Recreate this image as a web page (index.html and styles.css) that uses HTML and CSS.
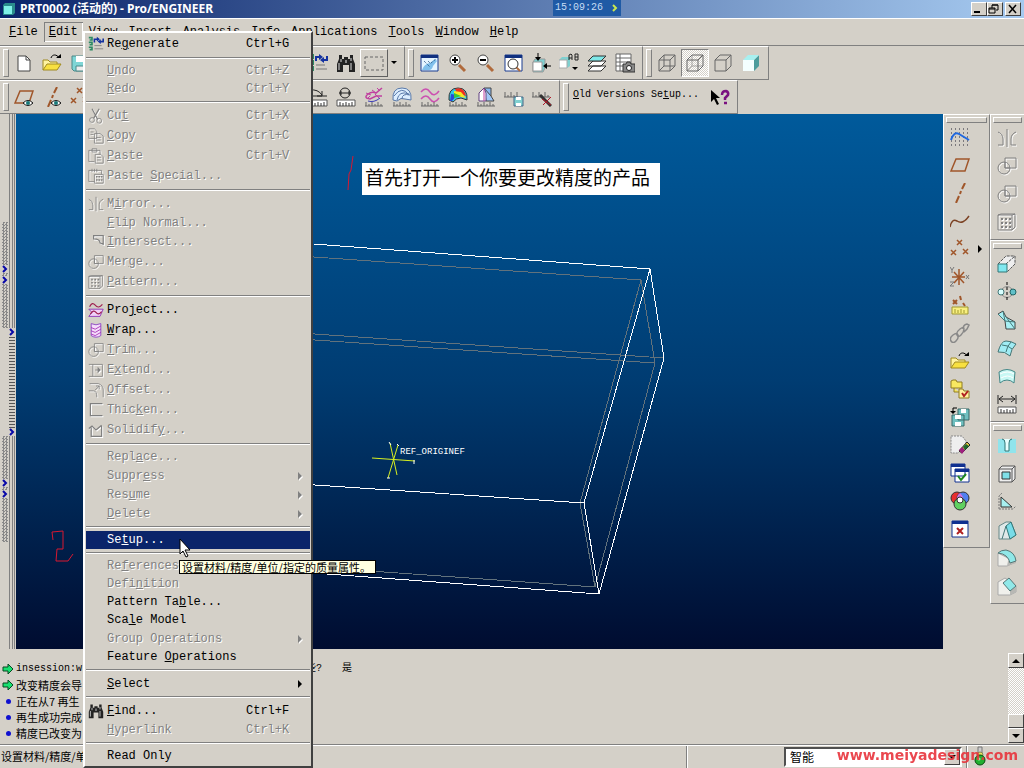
FILE: index.html
```
<!DOCTYPE html>
<html lang="zh-CN">
<head>
    <meta charset="UTF-8">
    <meta name="viewport" content="width=device-width, initial-scale=1.0">
    <title>PRT0002 - Pro/ENGINEER</title>
    <link rel="stylesheet" href="styles.css">
</head>
<body>
    <!-- Shared icon shapes -->
    <svg class="sprite" aria-hidden="true">
        <symbol id="i-regen" viewBox="0 0 20 20">
            <path d="M1 2h4v3H2M1 8h4v3H2M1 14h4v3H2" fill="none" stroke="#2b8a62" stroke-width="2"/>
            <path d="M8 8V4h4M19 3v4h-4" fill="none" stroke="#1432a0" stroke-width="2"/>
            <path d="M11 1l4 3-4 3zM16 10l-4-3 4-3z" fill="#1432a0"/>
            <path d="M8 12h9M8 16h11" stroke="#777"/>
        </symbol>
        <symbol id="i-find" viewBox="0 0 20 20">
            <path d="M3 2h3v4h2V4h4v2h2V2h3v4l2 5v8h-6v-7H7v7H1v-8l2-5z" fill="#222"/>
            <path d="M3 10v7M5 6v3M15 10v7M15 5v3" stroke="#ddd"/>
            <path d="M9 7h2v3H9z" fill="#888"/>
        </symbol>
        <symbol id="i-open" viewBox="0 0 20 20">
            <path d="M1 17V7h5l2 2h7v3" fill="#fff3a0" stroke="#a08a20"/>
            <path d="M1 17l4-6h14l-4 6z" fill="#f8e040" stroke="#a08a20"/>
            <path d="M9 5c1-4 6-4 8 0" fill="none" stroke="#000"/>
            <path d="M14 5h5V1z" fill="#000"/>
        </symbol>
        <symbol id="i-new" viewBox="0 0 20 20">
            <path d="M4 3h8l4 4v11H4z" fill="#fff" stroke="#444"/>
            <path d="M12 3v4h4" fill="none" stroke="#444"/>
        </symbol>
        <symbol id="i-save" viewBox="0 0 20 20">
            <path d="M2 3h16v15H4l-2-2z" fill="#7fd6d6" stroke="#4a8888"/>
            <path d="M6 3h9v6H6z" fill="#fff"/>
            <path d="M6 13h8v5H6z" fill="#eee" stroke="#4a8888"/>
        </symbol>
        <symbol id="i-eye" viewBox="0 0 20 20">
            <path d="M9 16q5-5 10 0q-5 5-10 0z" fill="#fff" stroke="#111"/>
            <circle cx="14" cy="16" r="2" fill="#187878"/>
        </symbol>
        <symbol id="i-plane" viewBox="0 0 20 20">
            <path d="M6 4h13l-4 12H1z" fill="none" stroke="#a0562a" stroke-width="1.5"/>
        </symbol>
        <symbol id="i-axis" viewBox="0 0 20 20">
            <path d="M15 0l-3 6M11 8l-1 3M9 13l-3 7" stroke="#a0562a" stroke-width="2"/>
        </symbol>
        <symbol id="i-points" viewBox="0 0 20 20">
            <path d="M7 1l5 5M12 1L7 6M1 11l5 5M6 11l-5 5M13 10l5 5M18 10l-5 5" stroke="#a0562a" stroke-width="1.5"/>
        </symbol>
        <symbol id="i-mirror" viewBox="0 0 20 20">
            <path d="M10 1v18M1 4q5 2 5 7v6H1M19 4q-5 2-5 7v6h5" fill="none" stroke="currentColor"/>
        </symbol>
        <symbol id="i-merge" viewBox="0 0 20 20">
            <path d="M8 2h11v10H8z" fill="none" stroke="currentColor"/>
            <circle cx="7" cy="12" r="6" fill="none" stroke="currentColor"/>
            <path d="M8 6v6h5" fill="none" stroke="currentColor"/>
        </symbol>
        <symbol id="i-pattern" viewBox="0 0 20 20">
            <path d="M1 3h14v15H1zM15 3l3-1v13l-3 3M1 3l3-1h14" fill="none" stroke="currentColor"/>
            <path d="M4 7h10M4 11h10M4 15h10" stroke="currentColor" stroke-width="2" stroke-dasharray="2 2"/>
        </symbol>
        <symbol id="i-cube" viewBox="0 0 20 20">
            <path d="M2 7h11v11H2zM2 7l5-5h11v11l-5 5M13 7l5-5" fill="none" stroke="#666"/>
        </symbol>
        <symbol id="i-cube-back" viewBox="0 0 20 20">
            <path d="M7 2v11h11M7 13l-5 5" fill="none" stroke="#666"/>
        </symbol>
        <symbol id="i-ruler" viewBox="0 0 20 20">
            <path d="M1 13h18v6H1z" fill="#fff" stroke="#555"/>
            <path d="M4 15v4M7 16v3M10 15v4M13 16v3M16 15v4" stroke="#333"/>
        </symbol>
        <symbol id="i-scale" viewBox="0 0 20 20">
            <path d="M1 19h18M2 15v4M5 17v2M8 15v4M11 17v2M14 15v4M17 17v2" stroke="#666"/>
        </symbol>
        <symbol id="i-sub" viewBox="0 0 8 8">
            <path d="M2 0l4 4-4 4z" fill="currentColor"/>
        </symbol>
        <symbol id="i-chevron" viewBox="0 0 6 8">
            <path d="M1 1l3 3-3 3" fill="none" stroke="#0808a8" stroke-width="2"/>
        </symbol>
        <symbol id="i-arrow" viewBox="0 0 12 12">
            <path d="M1 4h5V1l5 5-5 5V8H1z" fill="#18e070" stroke="#064820"/>
        </symbol>
    </svg>

    <!-- Title bar -->
    <header class="titlebar">
        <svg class="app-icon" viewBox="0 0 12 12"><path d="M0 2l2-2h10v10l-2 2H0z" fill="#2a8c8c"/><path d="M1 3h8v8H1z" fill="#7ff0e8"/></svg>
        <h1>PRT0002 (活动的) - Pro/ENGINEER</h1>
        <div class="clock">15:09:26 <svg viewBox="0 0 6 8"><path d="M1 1l3 3-3 3" fill="none" stroke="#c8e850" stroke-width="2"/></svg></div>
        <div class="window-buttons">
            <button class="win-btn" aria-label="Minimize"><svg viewBox="0 0 12 10"><path d="M2 8h6" stroke="#000" stroke-width="2"/></svg></button>
            <button class="win-btn" aria-label="Restore"><svg viewBox="0 0 12 10"><path d="M4 4V1h6v5H8M4 1h6M1 4h6v5H1zM1 5h6" fill="none" stroke="#000"/></svg></button>
            <button class="win-btn close" aria-label="Close"><svg viewBox="0 0 12 10"><path d="M3 1l7 8M10 1L3 9" stroke="#000" stroke-width="1.5"/></svg></button>
        </div>
    </header>

    <nav class="menubar">
        <button><u>F</u>ile</button>
        <button class="open"><u>E</u>dit</button>
        <button><u>V</u>iew</button>
        <button><u>I</u>nsert</button>
        <button><u>A</u>nalysis</button>
        <button>I<u>n</u>fo</button>
        <button>A<u>p</u>plications</button>
        <button><u>T</u>ools</button>
        <button><u>W</u>indow</button>
        <button><u>H</u>elp</button>
    </nav>

    <!-- Toolbars -->
    <div class="toolbar">
        <div class="group group-file">
            <div class="tools">
                <button class="tool" aria-label="New"><svg><use href="#i-new"/></svg></button>
                <button class="tool" aria-label="Open"><svg><use href="#i-open"/></svg></button>
                <button class="tool" aria-label="Save"><svg><use href="#i-save"/></svg></button>
            </div>
            <div class="tools">
                <button class="tool" aria-label="Regenerate"><svg><use href="#i-regen"/></svg></button>
                <button class="tool" aria-label="Find"><svg><use href="#i-find"/></svg></button>
                <button class="tool raised" aria-label="Select box"><svg viewBox="0 0 20 20"><path d="M1 4h18v13H1z" fill="none" stroke="#666" stroke-dasharray="3 2"/></svg></button>
                <button class="drop" aria-label="Selection options"><svg viewBox="0 0 6 4"><path d="M0 0h6L3 3z"/></svg></button>
            </div>
        </div>
        <div class="group">
            <button class="tool" aria-label="Repaint"><svg viewBox="0 0 20 20"><path d="M2 2h17v16H2z" fill="#e4f4ff" stroke="#1a3c90"/><path d="M2 2h17v3H2z" fill="#103080"/><path d="M3 17q2-6 8-7l5-4 2 2-4 5q-1 4-4 4z" fill="#80c0ec"/><path d="M5 8l6 6M9 8l3 3M12 10l5-4" fill="none" stroke="#205080" stroke-dasharray="1 1"/></svg></button>
            <button class="tool" aria-label="Zoom in"><svg viewBox="0 0 20 20"><path d="M12 12l6 6" stroke="#b06a3c" stroke-width="3"/><circle cx="8" cy="7" r="5" fill="#fff" stroke="#444"/><path d="M5 7h6M8 4v6" stroke="#000" stroke-width="2"/></svg></button>
            <button class="tool" aria-label="Zoom out"><svg viewBox="0 0 20 20"><path d="M12 12l6 6" stroke="#b06a3c" stroke-width="3"/><circle cx="8" cy="7" r="5" fill="#fff" stroke="#444"/><path d="M5 7h6" stroke="#000" stroke-width="2"/></svg></button>
            <button class="tool" aria-label="Refit"><svg viewBox="0 0 20 20"><path d="M2 2h17v16H2z" fill="#fff" stroke="#1a3c90"/><path d="M2 2h17v3H2z" fill="#103080"/><path d="M13 14l4 4" stroke="#b06a3c" stroke-width="2"/><circle cx="10" cy="11" r="5" fill="#fff" stroke="#333"/></svg></button>
            <button class="tool" aria-label="Reorient"><svg viewBox="0 0 20 20"><path d="M2 9l2-3h10v9l-2 4H2z" fill="#7fd0d0" stroke="#999"/><path d="M2 9h9v9H2z" fill="#fff" stroke="#999"/><path d="M7 0v5M20 13h-5" stroke="#000"/><path d="M4 4h6L7 8zM16 10v6l-4-3z"/></svg></button>
            <button class="tool" aria-label="Saved views"><svg viewBox="0 0 20 20"><path d="M0 7l3-3h8v9l-3 2H0z" fill="#7fd0d0"/><path d="M0 7h8v8H0z" fill="#fff" stroke="#aaa"/><path d="M10 7V2l2-1 1 1v5M10 5h3M16 1v6h3V1h-3M16 4h3" fill="none" stroke="#222"/><path d="M13 14h6l-3 3z"/></svg></button>
            <button class="tool" aria-label="Layers"><svg viewBox="0 0 20 20"><path d="M1 18l5-5h13l-5 5zM1 13l5-5h13l-5 5z" fill="#fff" stroke="#333"/><path d="M1 8l5-5h13l-5 5z" fill="#7fe8e8" stroke="#333"/></svg></button>
            <button class="tool" aria-label="View manager"><svg viewBox="0 0 20 20"><path d="M1 1h15v17H1zM1 5h15M1 9h15M1 13h15M5 1v17" fill="#fff" stroke="#666"/><path d="M8 11h3l1-2h3l1 2h4v8H8z" fill="#888" stroke="#333"/><circle cx="14" cy="15" r="2.5" fill="#fff" stroke="#222"/></svg></button>
        </div>
        <div class="group last">
            <button class="tool" aria-label="Wireframe"><svg><use href="#i-cube"/><use href="#i-cube-back"/></svg></button>
            <button class="tool pressed" aria-label="Hidden line"><svg><use href="#i-cube"/><use href="#i-cube-back" opacity=".5"/></svg></button>
            <button class="tool" aria-label="No hidden"><svg><use href="#i-cube"/></svg></button>
            <button class="tool" aria-label="Shading"><svg viewBox="0 0 20 20"><path d="M13 7l5-5v11l-5 5z" fill="#4c9c9c"/><path d="M2 7l5-5h11l-5 5z" fill="#a8f0f0"/><path d="M2 7h11v11H2z" fill="#f4ffff"/></svg></button>
        </div>
    </div>

    <div class="toolbar">
        <div class="group group-datum">
            <div class="tools">
                <button class="tool" aria-label="Datum planes"><svg><use href="#i-plane"/><use href="#i-eye"/></svg></button>
                <button class="tool" aria-label="Datum axes"><svg><use href="#i-axis"/><use href="#i-eye"/></svg></button>
                <button class="tool" aria-label="Datum points"><svg><use href="#i-points"/></svg></button>
            </div>
            <div class="tools">
                <button class="tool" aria-label="Angle"><svg viewBox="0 0 20 20"><path d="M2 3q8-1 12 5M14 4v5H9M1 9h18" fill="none" stroke="#222"/><use href="#i-ruler"/></svg></button>
                <button class="tool" aria-label="Diameter"><svg viewBox="0 0 20 20"><circle cx="9" cy="6" r="5" fill="none" stroke="#222"/><path d="M3 6h12M5 4v4M13 4v4" stroke="#222"/><use href="#i-ruler"/></svg></button>
                <button class="tool" aria-label="Curvature"><svg viewBox="0 0 20 20"><path d="M18 1l-6 5q-4-2-8 1-5 4 2 5l6-3h6" fill="none" stroke="#c040a0" stroke-width="1.5"/><path d="M13 1l3 3M8 3l4 3M2 6l5 2M3 12l3-3M11 7l4 4" fill="none" stroke="#c040a0"/><path d="M4 14q6 2 12-3" fill="none" stroke="#4040b8"/><use href="#i-scale"/></svg></button>
                <button class="tool" aria-label="Sections"><svg viewBox="0 0 20 20"><path d="M1 13Q0 1 10 1t9 12l-6-1q-4-2-8 2z" fill="#dceeff" stroke="#5878a8"/><path d="M2 9Q10-2 17 8M5 13Q7 3 17 7M10 12q0-6 8-4" fill="none" stroke="#5878a8"/><use href="#i-scale"/></svg></button>
                <button class="tool" aria-label="Offset analysis"><svg viewBox="0 0 20 20"><path d="M1 5q5-6 9 0t9-1M1 12q5-6 9 0t9-1" fill="none" stroke="#cc50b0" stroke-width="1.5"/><use href="#i-scale"/></svg></button>
                <button class="tool" aria-label="Shaded curvature"><svg viewBox="0 0 20 20"><path d="M1 13Q0 1 10 1t9 12l-6-2q-5 0-8 4z" fill="#30c8e8" stroke="#333"/><path d="M7 2q9-3 11 7l-9-3z" fill="#f03020"/><path d="M6 4l7 1 5 6-5-1-7-2z" fill="#f8e820"/><path d="M3 7l6 1-5 6H2z" fill="#2848d8"/><path d="M6 6l7 3-7 2z" fill="#38c838"/><use href="#i-scale"/></svg></button>
                <button class="tool" aria-label="Draft"><svg viewBox="0 0 20 20"><path d="M8 1h7v8l-5 5V6z" fill="#88b8f0" stroke="#444"/><path d="M8 1l7 8 3 5h-8z" fill="#a0c8f8" stroke="#444"/><path d="M3 6l5-5 2 5v8H3z" fill="#fff" stroke="#604080"/><path d="M8 2v12" stroke="#c040a0"/><use href="#i-scale"/></svg></button>
                <button class="tool" aria-label="Saved analysis"><svg viewBox="0 0 20 20"><path d="M0 10h14M1 5v5M4 8v2M7 5v5M10 8v2M13 5v5" stroke="#666"/><path d="M10 10h9v9h-9z" fill="#80d0d0" stroke="#468"/><path d="M12 10h5v3h-5zM12 16h5v3h-5z" fill="#fff"/></svg></button>
                <button class="tool" aria-label="Hide analysis"><svg viewBox="0 0 20 20"><path d="M0 10h18M1 5v5M4 8v2M7 5v5M10 8v2M13 5v5M16 8v2" stroke="#666"/><path d="M8 8l11 11" stroke="#333" stroke-width="3"/><path d="M19 10l-8 8M10 12l9 6" stroke="#b01828"/></svg></button>
            </div>
        </div>
        <div class="group last">
            <button class="text-tool"><u>O</u>ld Versions Se<u>t</u>up...</button>
            <button class="tool" aria-label="Context help"><svg viewBox="0 0 20 20"><path d="M1 3v12l3-3 3 6 2-1-3-6h4z" fill="#000"/><path d="M12 8q0-4 4-4 3 1 2 4l-3 3v2M14 16h3" fill="none" stroke="#7a1080" stroke-width="2.5"/></svg></button>
        </div>
    </div>

    <!-- Work area -->
    <main class="work">
        <aside class="sash">
            <div class="dots">
                <svg class="chevron"><use href="#i-chevron"/></svg>
                <svg class="chevron"><use href="#i-chevron"/></svg>
            </div>
            <div class="track">
                <svg class="chevron"><use href="#i-chevron"/></svg>
                <svg class="chevron"><use href="#i-chevron"/></svg>
            </div>
            <div class="dots">
                <svg class="chevron"><use href="#i-chevron"/></svg>
                <svg class="chevron"><use href="#i-chevron"/></svg>
            </div>
        </aside>

        <section class="viewport">
            <svg class="model" viewBox="16 114 927 535" width="927" height="535">
                <g fill="none" stroke="#62727c" shape-rendering="crispEdges">
                    <path d="M300 256L641 280L655 363L595 587L300 566"/>
                    <path d="M641 280L580 503L595 587"/>
                    <path d="M300 333L664 358M300 339L655 363"/>
                </g>
                <g fill="none" stroke="#fff" shape-rendering="crispEdges">
                    <path d="M300 243L650 269L664 358L599 594L300 572"/>
                    <path d="M300 484L584 503L599 594M584 503L650 269"/>
                </g>
                <path d="M372 458L415 461M390 443L397 475M398 445L388 478" stroke="#d8f020" fill="none"/>
                <path d="M389 442l2 3M397 444l2 2M414 460v4M387 478h3" stroke="#fff" fill="none"/>
                <text class="origin" x="400" y="454">REF_ORIGINEF</text>
                <path d="M353 156l-2 14-2 4-1 16M53 540l-1-8 11-1v18h-6l-1 12h12l5-7" fill="none" stroke="#d81830"/>
            </svg>
            <p class="note">首先打开一个你要更改精度的产品</p>
        </section>

        <aside class="side side-datum">
            <div class="vgroup">
                <button class="tool" aria-label="Sketch"><svg viewBox="0 0 20 20"><path d="M1 2h18M1 6h18M1 10h18M1 14h18M1 18h18" stroke="#223" stroke-dasharray="1 3"/><path d="M1 13q3-9 8-6t10 6" fill="none" stroke="#2068e0" stroke-width="2"/></svg></button>
                <button class="tool" aria-label="Plane"><svg><use href="#i-plane"/></svg></button>
                <button class="tool" aria-label="Axis"><svg><use href="#i-axis"/></svg></button>
                <button class="tool" aria-label="Curve"><svg viewBox="0 0 20 20"><path d="M0 16q2-9 7-6 6 4 12-5" fill="none" stroke="#7c4224" stroke-width="1.5"/></svg></button>
                <button class="tool fly" aria-label="Point"><svg><use href="#i-points"/></svg><svg class="sub"><use href="#i-sub"/></svg></button>
                <button class="tool" aria-label="Coordinate system"><svg viewBox="0 0 20 20"><path d="M9 2v16M2 10h13M4 5l10 11M14 5L4 16" stroke="#a0562a" stroke-width="1.5"/><path d="M0 0l2 3 2-3M2 3v3M16 8l3 4M19 8l-3 4M0 15h4l-4 4h4" fill="none" stroke="#777"/></svg></button>
                <button class="tool" aria-label="Analysis feature"><svg viewBox="0 0 20 20"><path d="M3 5l4 4M7 5L3 9M10 1l1 4M13 8l2 3" stroke="#a0562a" stroke-width="2"/><path d="M2 12h16v7H2z" fill="#f8f080" stroke="#a09830"/><path d="M5 14v4M8 15v3M11 14v4M14 15v3" stroke="#a09830"/></svg></button>
                <button class="tool" aria-label="Reference"><svg viewBox="0 0 20 20"><path d="M1 18q-2-3 2-6t5 0-2 6-5 0zM7 12q-1-3 3-6t4 0-3 6-4 0zM13 6q0-4 4-5l2 1-2 4-3 3" fill="none" stroke="#888" stroke-width="1.5"/></svg></button>
                <button class="tool" aria-label="Open"><svg><use href="#i-open"/></svg></button>
                <button class="tool" aria-label="Working directory"><svg viewBox="0 0 20 20"><path d="M1 9V2l2-1h3l1 2h5v6zM4 9v4h5" fill="#f8e860" stroke="#907c20"/><path d="M9 19v-9h4l1 2h5v7z" fill="#fff0a0" stroke="#907c20"/><path d="M12 14l2 3 4-5" fill="none" stroke="#b02020" stroke-width="2"/></svg></button>
                <button class="tool" aria-label="Save copy"><svg viewBox="0 0 20 20"><path d="M8 2h11v11H8zM2 8h12v11H2z" fill="#70c0c0" stroke="#386868"/><path d="M11 2h5v4h-5zM5 8h6v4H5zM5 15h6v4H5z" fill="#fff"/><path d="M7 1H3v5" fill="none" stroke="#000"/><path d="M0 4h6L3 7z"/></svg></button>
                <button class="tool" aria-label="Erase"><svg viewBox="0 0 20 20"><path d="M1 1h11l4 5v4L8 18H1z" fill="#eee" stroke="#888" stroke-dasharray="2 1"/><path d="M9 16l8-9 3 3-8 8z" fill="#e8c840" stroke="#222"/><path d="M9 15l3-3 3 3-3 4z" fill="#a02080"/><path d="M13 12l3-3 3 2-4 4z" fill="#206830"/></svg></button>
                <button class="tool" aria-label="Activate window"><svg viewBox="0 0 20 20"><path d="M1 1h14v12H1zM5 6h14v13H5z" fill="#fff" stroke="#103090"/><path d="M1 1h14v3H1zM5 6h14v3H5z" fill="#103090"/><path d="M8 13l3 4 5-6" fill="none" stroke="#208820" stroke-width="2"/></svg></button>
                <button class="tool" aria-label="Colors"><svg viewBox="0 0 20 20"><circle cx="7" cy="7" r="6" fill="#e83030" stroke="#333"/><circle cx="13" cy="7" r="6" fill="#5080f0" stroke="#333"/><circle cx="10" cy="13" r="6" fill="#60d060" stroke="#333"/><path d="M10 2q4 4 3 7H7q-1-4 3-7z" fill="#d070e0"/><circle cx="10" cy="9" r="3" fill="#fff" stroke="#333"/></svg></button>
                <button class="tool" aria-label="Close window"><svg viewBox="0 0 20 20"><path d="M2 2h16v16H2z" fill="#fff" stroke="#103090"/><path d="M2 2h16v3H2z" fill="#103090"/><path d="M7 9l6 6M13 9l-6 6" stroke="#b02020" stroke-width="2"/></svg></button>
            </div>
        </aside>

        <aside class="side side-feature">
            <div class="vgroup disabled">
                <button class="tool" disabled aria-label="Mirror"><svg><use href="#i-mirror"/></svg></button>
                <button class="tool" disabled aria-label="Merge"><svg><use href="#i-merge"/></svg></button>
                <button class="tool" disabled aria-label="Trim"><svg><use href="#i-merge"/></svg></button>
                <button class="tool" disabled aria-label="Pattern"><svg><use href="#i-pattern"/></svg></button>
            </div>
            <div class="vgroup">
                <button class="tool" aria-label="Extrude"><svg viewBox="0 0 20 20"><path d="M1 10l8-8h9v8l-8 8M9 10l9-8" fill="#eee" stroke="#555" stroke-dasharray="3 1"/><path d="M1 10h9v8H1z" fill="#80e8f0" stroke="#377"/></svg></button>
                <button class="tool" aria-label="Revolve"><svg viewBox="0 0 20 20"><path d="M5 7q5-5 10 0M5 13q5 5 10 0" fill="none" stroke="#888"/><circle cx="4" cy="10" r="3" fill="#d8ffff" stroke="#477"/><circle cx="16" cy="10" r="3" fill="#60c0c8" stroke="#266"/><path d="M10 0v20" stroke="#000" stroke-dasharray="3 2"/></svg></button>
                <button class="tool" aria-label="Sweep"><svg viewBox="0 0 20 20"><path d="M1 4l5-3 3 6 9 5v7h-9l-1-8z" fill="#a8f0f4" stroke="#444"/><path d="M1 4l7 7M6 1l2 10M9 7l9 12M8 11l10 1" fill="none" stroke="#477"/></svg></button>
                <button class="tool" aria-label="Boundary blend"><svg viewBox="0 0 20 20"><path d="M1 14Q4 3 9 3t10 3q-5 5-6 12-5-5-12-4z" fill="#a0ecf4" stroke="#477"/><path d="M5 7q6 0 10 4M9 14q1-6 5-10" fill="none" stroke="#477"/></svg></button>
                <button class="tool" aria-label="Style"><svg viewBox="0 0 20 20"><path d="M2 6q8-5 16 0l-1 11q-3-3-7-3t-7 3z" fill="#c8f8f4" stroke="#488"/><path d="M3 8q8-4 14 0M4 12q7-4 12 0" fill="none" stroke="#fff"/></svg></button>
                <button class="tool" aria-label="Measure"><svg viewBox="0 0 20 20"><path d="M1 1v9M19 1v9M2 5h16M6 2L2 5l4 3M14 2l4 3-4 3" fill="none" stroke="#222"/><use href="#i-ruler"/></svg></button>
            </div>
            <div class="vgroup last">
                <button class="tool" aria-label="Hole"><svg viewBox="0 0 20 20"><path d="M1 3h4q3 0 3 4v8h4V7q0-4 3-4h4v14H1z" fill="#90e4ec"/><path d="M5 3q3 0 3 4v8h4V7q0-4 3-4" fill="#e8ffff" stroke="#377"/></svg></button>
                <button class="tool" aria-label="Shell"><svg viewBox="0 0 20 20"><path d="M2 5l3-3h13v13l-3 3H2zM2 5h13v13M15 5l3-3" fill="#eee" stroke="#555"/><path d="M5 8h8v7H5z" fill="#80e0e8" stroke="#333"/></svg></button>
                <button class="tool" aria-label="Rib"><svg viewBox="0 0 20 20"><path d="M2 17V4l3-3M2 17h14l3-3" fill="none" stroke="#777" stroke-dasharray="2 1"/><path d="M4 5v10h11z" fill="#a8f0f0" stroke="#333"/></svg></button>
                <button class="tool" aria-label="Draft"><svg viewBox="0 0 20 20"><path d="M2 6l7-4h5l5 13-6 4H2z" fill="#e0e8e8" stroke="#688"/><path d="M9 6l5-4 5 13-6 4z" fill="#78dce8" stroke="#377"/><path d="M9 6L5 19" stroke="#477"/></svg></button>
                <button class="tool" aria-label="Round"><svg viewBox="0 0 20 20"><path d="M1 5v13h9l9-4z" fill="#f0f0ec" stroke="#aaa"/><path d="M10 18l1-5 8-1v3z" fill="#b8b8b4"/><path d="M1 5q3-3 8-3 9 2 10 11l-6 2Q11 6 1 5z" fill="#90e8e8" stroke="#577"/></svg></button>
                <button class="tool" aria-label="Chamfer"><svg viewBox="0 0 20 20"><path d="M1 6l7-4 11 8v6l-6 3H1z" fill="#f0f0ec" stroke="#aaa"/><path d="M13 19v-4l6-5v6z" fill="#b8b8b4"/><path d="M6 7l6-5 7 8-6 5z" fill="#90e8e8" stroke="#577"/></svg></button>
            </div>
        </aside>
    </main>

    <!-- Messages -->
    <section class="messages">
        <ul class="log">
            <li><svg><use href="#i-arrow"/></svg><span class="msg">insession:w</span><span>些?</span><span class="answer">是</span></li>
            <li><svg><use href="#i-arrow"/></svg><span class="msg">改变精度会导</span></li>
            <li><i class="bullet"></i><span class="msg">正在从7 再生</span></li>
            <li><i class="bullet"></i><span class="msg">再生成功完成</span></li>
            <li><i class="bullet"></i><span class="msg">精度已改变为</span></li>
        </ul>
        <div class="scrollbar">
            <button class="scroll-btn" aria-label="Scroll up"><svg viewBox="0 0 8 4"><path d="M0 4h8L4 0z"/></svg></button>
            <div class="thumb"></div>
            <button class="scroll-btn" aria-label="Scroll down"><svg viewBox="0 0 8 4"><path d="M0 0h8L4 4z"/></svg></button>
        </div>
    </section>

    <footer class="statusbar">
        <p class="hint">设置材料/精度/单位</p>
        <div class="filter">
            <span class="combo">
                <select aria-label="Filter"><option>智能</option></select>
                <span class="combo-arrow"><svg viewBox="0 0 8 4"><path d="M0 0h8L4 4z"/></svg></span>
            </span>
        </div>
        <div class="light">
            <svg viewBox="0 0 12 20"><path d="M4 1h4v6H4z" fill="#ccc" stroke="#777"/><circle cx="6" cy="9" r="3" fill="#e8e060" stroke="#885"/><circle cx="6" cy="14" r="5" fill="#20b030" stroke="#064a10"/><circle cx="5" cy="13" r="1.5" fill="#a0f0a0"/></svg>
        </div>
        <strong class="watermark">www.meiyadesign.com</strong>
    </footer>

    <!-- Edit menu -->
    <ul class="menu">
        <li><button class="item tall"><svg><use href="#i-regen"/></svg><span>Re<u>g</u>enerate</span><kbd>Ctrl+G</kbd></button></li>
        <li class="sep"></li>
        <li><button class="item" disabled><span><u>U</u>ndo</span><kbd>Ctrl+Z</kbd></button></li>
        <li><button class="item" disabled><span><u>R</u>edo</span><kbd>Ctrl+Y</kbd></button></li>
        <li class="sep"></li>
        <li><button class="item tall" disabled><svg viewBox="0 0 20 20"><path d="M5 1l7 13M14 1L7 13" stroke="currentColor" stroke-width="1.5"/><circle cx="5" cy="15" r="3" fill="none" stroke="currentColor"/><circle cx="14" cy="16" r="3" fill="none" stroke="currentColor"/></svg><span>Cu<u>t</u></span><kbd>Ctrl+X</kbd></button></li>
        <li><button class="item tall" disabled><svg viewBox="0 0 20 20"><path d="M1 1h7l3 3v9H1zM8 7h7l4 3v9H8zM3 5h4M3 8h4M10 12h6M10 15h6" fill="none" stroke="currentColor"/></svg><span><u>C</u>opy</span><kbd>Ctrl+C</kbd></button></li>
        <li><button class="item tall" disabled><svg viewBox="0 0 20 20"><path d="M8 17H1V3h14v5M5 1h6v4H5zM9 8h7l3 3v8H9zM11 12h5M11 15h5" fill="none" stroke="currentColor"/></svg><span><u>P</u>aste</span><kbd>Ctrl+V</kbd></button></li>
        <li><button class="item tall" disabled><svg viewBox="0 0 20 20"><path d="M8 17H1V3h16v5M5 1v4M8 1v4M11 1v4M8 8h11v11H8z" fill="none" stroke="currentColor"/><path d="M10 11h8M10 15h8" stroke="currentColor" stroke-width="2" stroke-dasharray="2 1"/></svg><span>Paste <u>S</u>pecial...</span></button></li>
        <li class="sep"></li>
        <li><button class="item tall" disabled><svg><use href="#i-mirror"/></svg><span>M<u>i</u>rror...</span></button></li>
        <li><button class="item" disabled><span><u>F</u>lip Normal...</span></button></li>
        <li><button class="item tall" disabled><svg viewBox="0 0 20 20"><path d="M7 2h12v11l-4-2q0-5-8-5z" fill="none" stroke="currentColor" stroke-width="1.5"/></svg><span><u>I</u>ntersect...</span></button></li>
        <li><button class="item tall" disabled><svg><use href="#i-merge"/></svg><span>Mer<u>g</u>e...</span></button></li>
        <li><button class="item tall" disabled><svg><use href="#i-pattern"/></svg><span><u>P</u>attern...</span></button></li>
        <li class="sep"></li>
        <li><button class="item tall"><svg viewBox="0 0 20 20"><path d="M1 9h18l-4 9H1l4-5z" fill="#f0d0f8" stroke="#8020b0"/><path d="M2 6q3-7 7-2t9-1M3 15q4-6 7-2t7-1" fill="none" stroke="#a02050" stroke-width="1.5"/></svg><span>Pro<u>j</u>ect...</span></button></li>
        <li><button class="item tall"><svg viewBox="0 0 20 20"><path d="M4 2q6 3 12 0v15q-6 4-12 0z" fill="#f4dcfa" stroke="#8030c0"/><path d="M4 7l5 2 7-4M4 11l5 2 7-4M4 15l5 2 7-4" fill="none" stroke="#a020b0"/></svg><span><u>W</u>rap...</span></button></li>
        <li><button class="item tall" disabled><svg><use href="#i-merge"/></svg><span><u>T</u>rim...</span></button></li>
        <li><button class="item tall" disabled><svg viewBox="0 0 20 20"><path d="M1 3h17v15H1M6 3v15M9 10h6" fill="none" stroke="currentColor"/><path d="M12 6l4 4-4 4z" fill="currentColor"/></svg><span>E<u>x</u>tend...</span></button></li>
        <li><button class="item tall" disabled><svg viewBox="0 0 20 20"><path d="M2 2h11q6 2 6 8v9M1 11h6q4 0 4 8M9 10l5-5M10 5h4v4" fill="none" stroke="currentColor"/></svg><span><u>O</u>ffset...</span></button></li>
        <li><button class="item tall" disabled><svg viewBox="0 0 20 20"><path d="M18 2H3v15h15" fill="none" stroke="currentColor" stroke-width="1.5"/></svg><span>Thic<u>k</u>en...</span></button></li>
        <li><button class="item tall" disabled><svg viewBox="0 0 20 20"><path d="M1 8l4-3 5 5 7-6M4 7v11h13V5" fill="none" stroke="currentColor" stroke-width="1.5"/></svg><span>Solidif<u>y</u>...</span></button></li>
        <li class="sep"></li>
        <li><button class="item" disabled><span>Repl<u>a</u>ce...</span></button></li>
        <li><button class="item more" disabled><span>Suppr<u>e</u>ss</span><svg class="sub"><use href="#i-sub"/></svg></button></li>
        <li><button class="item more" disabled><span>Res<u>u</u>me</span><svg class="sub"><use href="#i-sub"/></svg></button></li>
        <li><button class="item more" disabled><span><u>D</u>elete</span><svg class="sub"><use href="#i-sub"/></svg></button></li>
        <li class="sep"></li>
        <li class="current">
            <button class="item selected"><span>Se<u>t</u>up...</span></button>
            <div class="tooltip">设置材料/精度/单位/指定的质量属性。</div>
            <svg class="pointer" viewBox="0 0 12 20"><path d="M1 1v15l3-3 3 6 2-1-3-6h5z" fill="#fff" stroke="#000"/></svg>
        </li>
        <li class="sep"></li>
        <li><button class="item" disabled><span>Re<u>f</u>erences</span></button></li>
        <li><button class="item" disabled><span>Defi<u>n</u>ition</span></button></li>
        <li><button class="item"><span>Pattern Ta<u>b</u>le...</span></button></li>
        <li><button class="item"><span>Sca<u>l</u>e Model</span></button></li>
        <li><button class="item more" disabled><span>Group Operations</span><svg class="sub"><use href="#i-sub"/></svg></button></li>
        <li><button class="item"><span>Feature <u>O</u>perations</span></button></li>
        <li class="sep"></li>
        <li><button class="item more"><span><u>S</u>elect</span><svg class="sub"><use href="#i-sub"/></svg></button></li>
        <li class="sep"></li>
        <li><button class="item tall"><svg><use href="#i-find"/></svg><span><u>F</u>ind...</span><kbd>Ctrl+F</kbd></button></li>
        <li><button class="item" disabled><span><u>H</u>yperlink</span><kbd>Ctrl+K</kbd></button></li>
        <li class="sep"></li>
        <li><button class="item"><span>Read Only</span></button></li>
    </ul>
</body>
</html>
```

FILE: styles.css
```
/* Base */
* {
    margin: 0;
    padding: 0;
    box-sizing: border-box;
}

body {
    position: relative;
    display: flex;
    flex-direction: column;
    height: 100vh;
    overflow: hidden;
    background-color: #d4d0c8;
    color: #000;
    font-family: "Liberation Mono", "Noto Sans CJK SC", monospace;
    font-size: 12px;
}

button {
    border: 0;
    background: none;
    color: inherit;
    font: inherit;
}

ul {
    list-style: none;
}

svg {
    display: block;
    flex: none;
}

.sprite {
    position: absolute;
    width: 0;
    height: 0;
}

/* Title bar */
.titlebar {
    position: relative;
    display: flex;
    align-items: center;
    gap: 5px;
    height: 18px;
    flex: none;
    padding: 0 3px;
    background: linear-gradient(90deg, #0a246a, #a6caf0);
    color: #fff;
}

.app-icon {
    width: 12px;
    height: 12px;
}

.titlebar h1 {
    flex: 1;
    font: bold 12px/16px "Noto Sans", "Noto Sans CJK SC", sans-serif;
}

.clock {
    position: absolute;
    left: 54%;
    top: 0;
    display: flex;
    align-items: center;
    gap: 9px;
    width: 68px;
    padding-left: 2px;
    background-color: #1f5aa5;
    color: #c4dcf4;
    font-size: 10px;
    line-height: 16px;
}

.clock svg {
    width: 6px;
    height: 8px;
}

.window-buttons {
    display: flex;
}

.win-btn,
.scroll-btn,
.thumb,
.combo-arrow {
    background-color: #d4d0c8;
    border: 1px solid;
    border-color: #fff #404040 #404040 #fff;
}

.win-btn {
    width: 16px;
    height: 14px;
}

.win-btn svg {
    width: 12px;
    height: 10px;
}

.close {
    margin-left: 2px;
}

/* Menu bar */
.menubar {
    display: flex;
    align-items: center;
    gap: 1px;
    flex: none;
    height: 28px;
    padding-left: 4px;
    border-top: 1px solid #fff;
    border-bottom: 1px solid #808080;
}

.menubar button {
    height: 20px;
    padding: 0 5px;
}

.menubar .open {
    box-shadow: inset 1px 1px #808080, inset -1px -1px #fff;
}

/* Toolbars */
.toolbar {
    display: flex;
    flex: none;
    height: 34px;
}

.group {
    position: relative;
    display: flex;
    align-items: center;
    padding: 0 3px 0 10px;
    border-right: 1px solid #808080;
    border-bottom: 1px solid #808080;
    border-top: 1px solid #fff;
}

.group::before {
    content: '';
    position: absolute;
    left: 3px;
    top: 2px;
    bottom: 2px;
    width: 4px;
    border: 1px solid;
    border-color: #fff #808080 #808080 #fff;
}

.group-file {
    width: 405px;
    justify-content: space-between;
}

.group-datum {
    width: 560px;
    justify-content: space-between;
}

.tools {
    display: flex;
    align-items: center;
}

.tool {
    display: flex;
    align-items: center;
    justify-content: center;
    flex: none;
    width: 28px;
    height: 28px;
}

.tool svg {
    width: 20px;
    height: 20px;
}

.raised {
    border: 1px solid;
    border-color: #fff #606060 #606060 #fff;
}

.pressed {
    border: 1px solid;
    border-color: #808080 #fff #fff #808080;
    background: repeating-conic-gradient(#fff 0 25%, #d4d0c8 0 50%) 0 0 / 2px 2px;
}

.drop {
    width: 13px;
    padding-left: 3px;
}

.drop svg {
    width: 6px;
    height: 4px;
}

.text-tool {
    padding: 0 7px 6px 3px;
    font-size: 10px;
}

/* Work area */
.work {
    display: flex;
    flex: 1;
    min-height: 0;
}

.sash {
    display: flex;
    flex-direction: column;
    justify-content: center;
    width: 16px;
    background: linear-gradient(90deg, transparent 9px, #808080 9px 10px, transparent 10px 12px, #808080 12px 13px, transparent 13px 14px, #808080 14px 15px, transparent 15px);
}

.dots {
    display: flex;
    flex-direction: column;
    justify-content: center;
    gap: 3px;
    width: 6px;
    height: 106px;
    margin-left: 2px;
    background: repeating-conic-gradient(#888 0 25%, #d4d0c8 0 50%) 0 0 / 3px 3px;
}

.track {
    display: flex;
    flex-direction: column;
    justify-content: space-between;
    width: 6px;
    height: 108px;
    margin-left: 9px;
    background: repeating-linear-gradient(#555 0 1px, #d4d0c8 1px 3px);
}

.chevron {
    width: 6px;
    height: 8px;
    background-color: #d4d0c8;
}

.viewport {
    position: relative;
    flex: 1;
    min-width: 0;
    overflow: hidden;
    background: linear-gradient(#005a9b, #003c72 50%, #000c30);
}

.origin {
    fill: #fff;
    font-size: 9px;
}

.note {
    position: absolute;
    left: 346px;
    top: 49px;
    padding: 0 10px 4px 3px;
    background-color: #fff;
    font: 19px/28px "Noto Sans CJK SC", sans-serif;
    white-space: nowrap;
}

.side-datum {
    width: 47px;
}

.side-feature {
    width: 34px;
}

.vgroup {
    position: relative;
    padding: 8px 0 4px 2px;
    border-left: 1px solid #fff;
    border-top: 1px solid #fff;
    border-right: 1px solid #808080;
    border-bottom: 1px solid #808080;
}

.vgroup::before {
    content: '';
    position: absolute;
    left: 2px;
    right: 2px;
    top: 2px;
    height: 4px;
    border: 1px solid;
    border-color: #fff #808080 #808080 #fff;
}

.side-feature .vgroup {
    padding-top: 9px;
    padding-bottom: 3px;
    border-right: 0;
}

.disabled {
    color: #808080;
}

.disabled svg {
    filter: drop-shadow(1px 1px 0 #fff);
}

.fly {
    position: relative;
}

.tool .sub {
    position: absolute;
    right: -10px;
    top: 10px;
}

.sub,
.tool .sub {
    width: 8px;
    height: 8px;
}

/* Messages */
.messages {
    display: flex;
    justify-content: space-between;
    flex: none;
    height: 96px;
    border-bottom: 1px solid #808080;
}

.log {
    padding-top: 12px;
    font: 11px/16px "Noto Sans CJK SC", sans-serif;
}

.log li {
    display: flex;
    align-items: center;
    gap: 2px;
    height: 16px;
    padding-left: 2px;
}

.log li:first-child {
    font-family: "Liberation Mono", "Noto Sans CJK SC", monospace;
    font-size: 10px;
}

.log svg {
    width: 12px;
    height: 12px;
}

.bullet {
    width: 5px;
    height: 5px;
    margin: 0 3px 0 4px;
    border-radius: 50%;
    background-color: #1010d0;
}

.msg {
    width: 288px;
}

.answer {
    margin-left: 18px;
}

.scrollbar {
    display: flex;
    flex-direction: column;
    justify-content: space-between;
    width: 16px;
    margin: 4px 0 1px;
    background: repeating-conic-gradient(#fff 0 25%, #d4d0c8 0 50%) 0 0 / 2px 2px;
}

.scroll-btn {
    display: flex;
    align-items: center;
    justify-content: center;
    height: 15px;
}

.scroll-btn svg,
.combo-arrow svg {
    width: 8px;
    height: 4px;
}

.thumb {
    height: 14px;
    margin-top: auto;
}

/* Status bar */
.statusbar {
    position: relative;
    display: flex;
    flex: none;
    height: 23px;
    border-top: 1px solid #fff;
    font: 11px/21px "Noto Sans CJK SC", sans-serif;
}

.hint {
    flex: 1;
    padding-left: 1px;
    border-right: 1px solid #808080;
}

.filter {
    display: flex;
    justify-content: flex-end;
    width: 280px;
    padding: 1px 4px 1px 0;
    border-left: 1px solid #fff;
    border-right: 1px solid #808080;
}

.combo {
    position: relative;
    width: 178px;
}

.combo select {
    width: 100%;
    height: 20px;
    padding-left: 4px;
    appearance: none;
    border: 2px solid;
    border-color: #505050 #fff #fff #505050;
    border-radius: 0;
    background-color: #fff;
    color: #000;
    font: 12px/16px "Noto Sans CJK SC", sans-serif;
}

.combo-arrow {
    position: absolute;
    right: 2px;
    top: 2px;
    display: flex;
    align-items: center;
    justify-content: center;
    width: 16px;
    height: 16px;
    pointer-events: none;
}

.light {
    width: 57px;
    padding-left: 6px;
    border-left: 1px solid #fff;
}

.light svg {
    width: 12px;
    height: 20px;
}

.watermark {
    position: absolute;
    right: 6px;
    top: 0;
    color: #e8343c;
    font: bold 14px/18px "DejaVu Sans", sans-serif;
    opacity: 0.9;
}

/* Edit menu */
.menu {
    position: absolute;
    left: 83px;
    top: 31px;
    width: 230px;
    padding: 1px;
    border: 2px solid;
    border-color: #fff #404040 #404040 #fff;
    background-color: #d4d0c8;
}

.item {
    display: grid;
    grid-template-columns: 16px 136px 1fr;
    align-items: center;
    column-gap: 3px;
    width: 100%;
    height: 18px;
    padding-left: 2px;
    text-align: left;
    white-space: nowrap;
}

.item svg {
    width: 16px;
    height: 16px;
}

.item span {
    grid-column: 2;
}

.item kbd {
    font: inherit;
}

.item:disabled {
    color: #808080;
    text-shadow: 1px 1px #fff;
}

.item:disabled svg {
    filter: drop-shadow(1px 1px 0 #fff);
}

.tall {
    height: 20px;
}

.more {
    height: 19px;
}

.item .sub {
    justify-self: end;
    width: 8px;
    height: 8px;
    margin-right: 6px;
}

.selected {
    background-color: #0a246a;
    color: #fff;
}

.sep {
    height: 8px;
    background: linear-gradient(transparent 3px, #808080 3px 4px, #fff 4px 5px, transparent 5px);
}

.current {
    position: relative;
}

.tooltip {
    position: absolute;
    left: 93px;
    top: 29px;
    z-index: 1;
    padding: 0 4px 0 2px;
    border: 1px solid #000;
    background-color: #ffffe1;
    font: 11px/12px "Noto Sans CJK SC", sans-serif;
    white-space: nowrap;
}

.pointer {
    position: absolute;
    left: 93px;
    top: 7px;
    z-index: 2;
    width: 12px;
    height: 20px;
}
```
